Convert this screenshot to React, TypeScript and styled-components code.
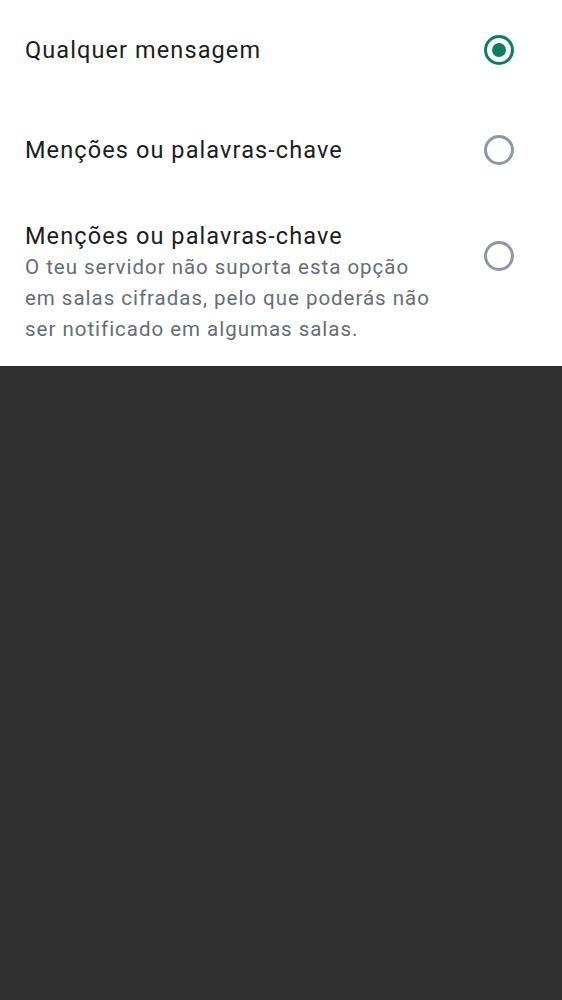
import React from "react";
import styled, { createGlobalStyle } from "styled-components";

const Global = createGlobalStyle`
  html, body { margin: 0; padding: 0; background: #303030; }
  body { font-family: Roboto, "Noto Sans", sans-serif; }
`;

const Page = styled.div`
  width: 562px;
  min-height: 1000px;
  background: #303030;
`;

const Sheet = styled.div`
  background: #ffffff;
  display: flex;
  flex-direction: column;
`;

const Row = styled.div<{ $tall?: boolean }>`
  display: flex;
  align-items: ${(p) => (p.$tall ? "flex-start" : "center")};
  justify-content: space-between;
  padding: ${(p) => (p.$tall ? "20px 48px 21px 25px" : "0 48px 0 25px")};
  height: ${(p) => (p.$tall ? "auto" : "100px")};
  box-sizing: border-box;
`;

const TextCol = styled.div`
  display: flex;
  flex-direction: column;
`;

const Title = styled.div`
  font-size: 23.5px;
  line-height: 32px;
  color: #1b1d22;
  letter-spacing: 1.1px;
`;

const Sub = styled.div`
  font-size: 20.5px;
  line-height: 31px;
  color: #656d77;
  width: 411px;
  letter-spacing: 0.98px;
`;

const Radio = styled.div<{ $checked?: boolean; $offset?: number }>`
  width: 30px;
  height: 30px;
  box-sizing: border-box;
  border-radius: 50%;
  border: 3px solid ${(p) => (p.$checked ? "#0b7f63" : "#8d97a5")};
  display: flex;
  align-items: center;
  justify-content: center;
  flex-shrink: 0;
  margin-top: ${(p) => p.$offset ?? 0}px;
`;

const Dot = styled.div`
  width: 14px;
  height: 14px;
  border-radius: 50%;
  background: #0b7f63;
`;

export default function App() {
  return (
    <Page>
      <Global />
      <Sheet>
        <Row>
          <Title>Qualquer mensagem</Title>
          <Radio $checked>
            <Dot />
          </Radio>
        </Row>
        <Row>
          <Title>Menções ou palavras-chave</Title>
          <Radio />
        </Row>
        <Row $tall>
          <TextCol>
            <Title>Menções ou palavras-chave</Title>
            <Sub>
              O teu servidor não suporta esta opção em salas cifradas, pelo que poderás não ser
              notificado em algumas salas.
            </Sub>
          </TextCol>
          <Radio $offset={21} />
        </Row>
      </Sheet>
    </Page>
  );
}
